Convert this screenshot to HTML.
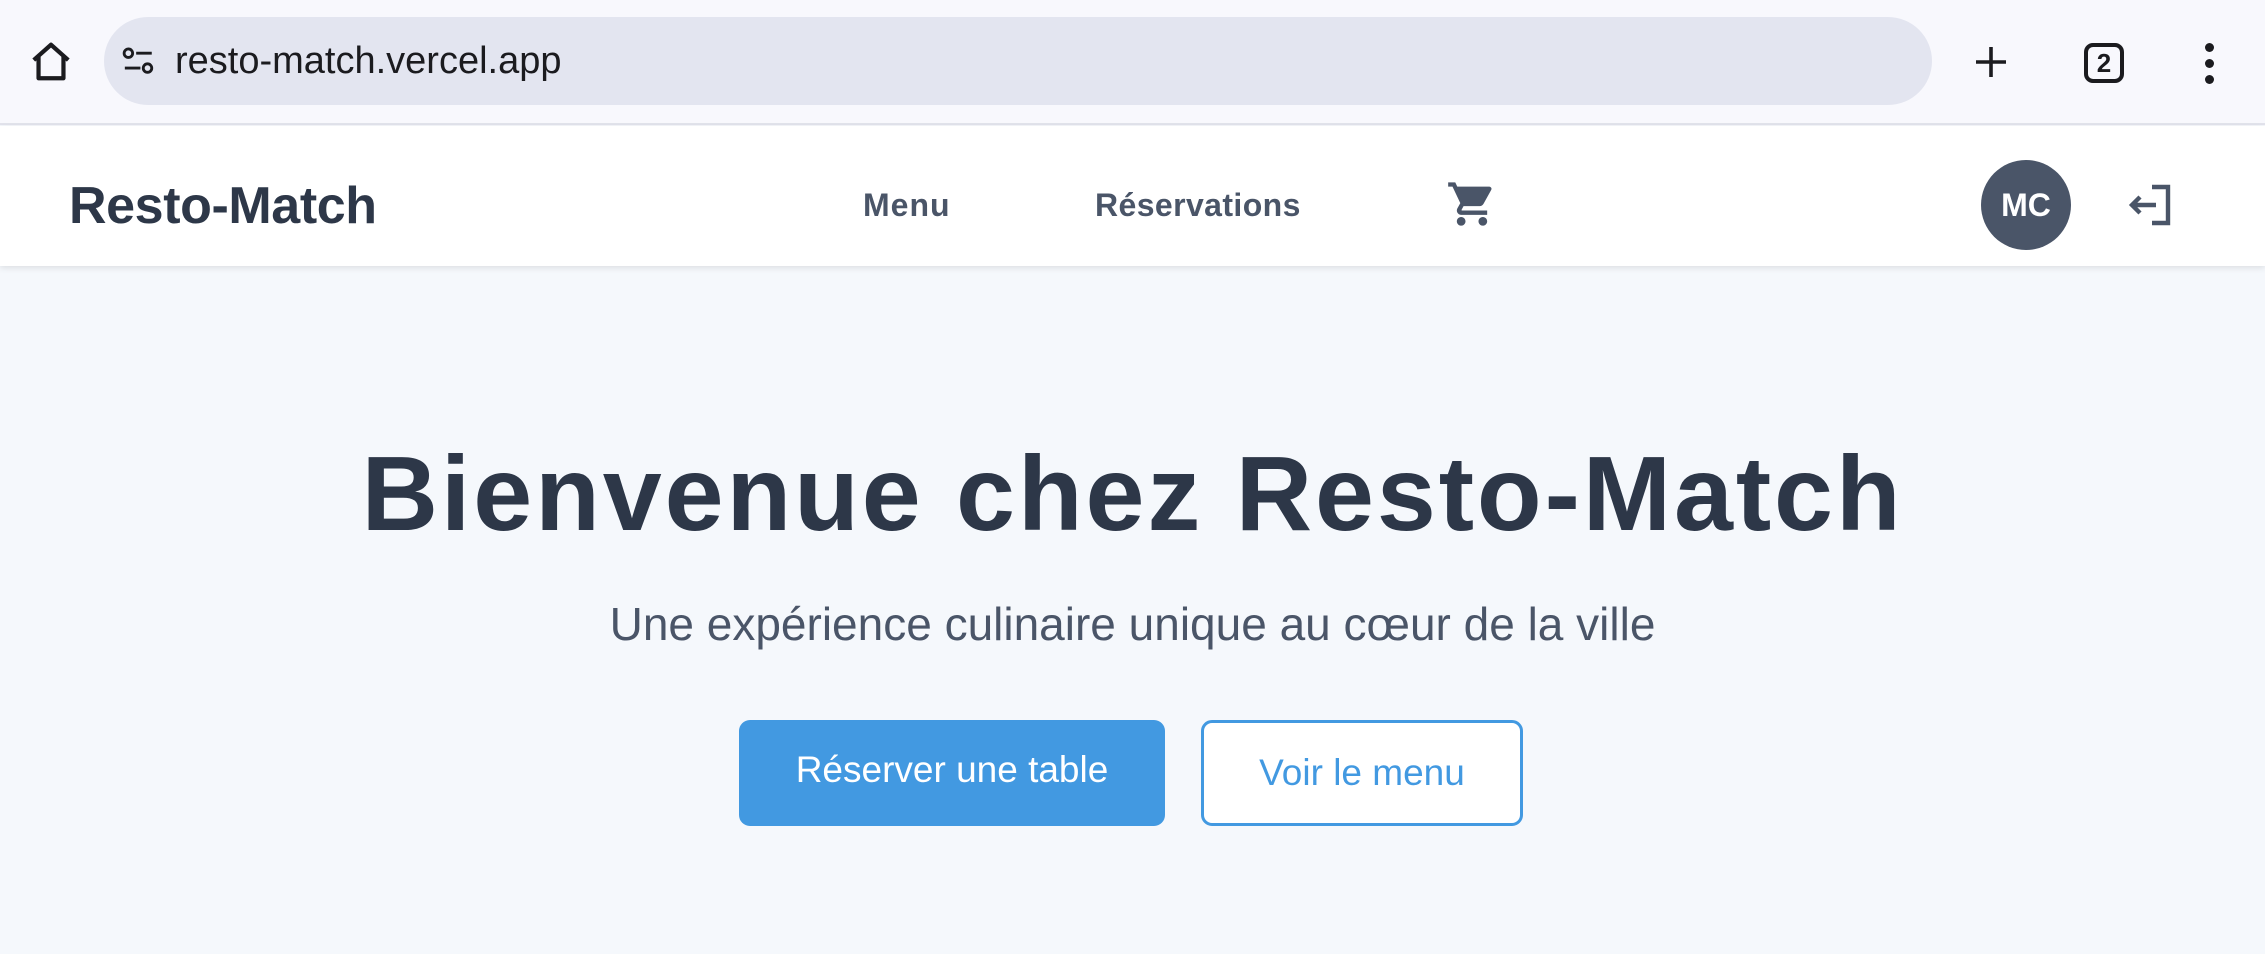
<!DOCTYPE html>
<html><head><meta charset="utf-8"><style>
*{margin:0;padding:0;box-sizing:border-box}
body{width:2265px;height:954px;overflow:hidden;background:#f5f8fc;font-family:"Liberation Sans",sans-serif;position:relative}
.abs{position:absolute}
#chrome{left:0;top:0;width:2265px;height:125px;background:#f8f8fd;border-bottom:2px solid #e2e3ec}
#url{left:104px;top:17px;width:1828px;height:88px;border-radius:44px;background:#e3e5f0}
#nav{left:0;top:126px;width:2265px;height:140px;background:#fff;box-shadow:0 2px 6px rgba(0,0,0,.1)}
.t{white-space:nowrap;line-height:1}
</style></head><body>
<div id="chrome" class="abs"></div>
<svg class="abs" style="left:28px;top:38px" width="46" height="48" viewBox="0 0 24 24"><path d="M3 11 L12 3 L21 11 M5.5 9 V20.5 H18.5 V9" fill="none" stroke="#1b1b1f" stroke-width="2.2" stroke-linejoin="round"/></svg>
<div id="url" class="abs"></div>
<svg class="abs" style="left:122px;top:46px" width="34" height="30" viewBox="0 0 24 20"><circle cx="4.5" cy="4.5" r="3" fill="none" stroke="#1b1b1f" stroke-width="2"/><path d="M10 4.5h11M2 15h11" stroke="#1b1b1f" stroke-width="2"/><circle cx="18" cy="15" r="3" fill="none" stroke="#1b1b1f" stroke-width="2"/></svg>
<div class="abs t" style="left:175px;top:42px;font-size:38px;color:#1b1b1f">resto-match.vercel.app</div>
<svg class="abs" style="left:1973px;top:44px" width="36" height="36" viewBox="0 0 24 24"><path d="M12 2v20M2 12h20" stroke="#1b1b1f" stroke-width="2.4"/></svg>
<div class="abs" style="left:2084px;top:43px;width:40px;height:40px;border:4px solid #1b1b1f;border-radius:9px;font-size:26px;font-weight:bold;text-align:center;line-height:32px;color:#1b1b1f">2</div>
<div class="abs" style="left:2205px;top:43px;width:10px;height:42px">
<div style="width:9px;height:9px;border-radius:50%;background:#1b1b1f;margin-bottom:7px"></div><div style="width:9px;height:9px;border-radius:50%;background:#1b1b1f;margin-bottom:7px"></div><div style="width:9px;height:9px;border-radius:50%;background:#1b1b1f"></div></div>
<div id="nav" class="abs"></div>
<div class="abs t" style="left:69px;top:180px;font-size:52px;font-weight:bold;color:#2d3748;letter-spacing:-0.4px">Resto-Match</div>
<div class="abs t" style="left:863px;top:189px;font-size:32px;font-weight:bold;color:#4a5568;letter-spacing:1px">Menu</div>
<div class="abs t" style="left:1095px;top:189px;font-size:32px;font-weight:bold;color:#4a5568;letter-spacing:0.4px">Réservations</div>
<svg class="abs" style="left:1446px;top:178px" width="52" height="52" viewBox="0 0 24 24"><path fill="#4a5568" d="M7 18c-1.1 0-2 .9-2 2s.9 2 2 2 2-.9 2-2-.9-2-2-2zM1 2v2h2l3.6 7.590-1.35 2.45c-.16.28-.25.61-.25.96 0 1.1.9 2 2 2h12v-2H7.42c-.14 0-.25-.11-.25-.25l.03-.12.9-1.63h7.45c.75 0 1.41-.41 1.75-1.03l3.58-6.49A1 1 0 0 0 20 4H5.21l-.94-2H1zm16 16c-1.1 0-2 .9-2 2s.9 2 2 2 2-.9 2-2-.9-2-2-2z"/></svg>
<div class="abs" style="left:1981px;top:160px;width:90px;height:90px;border-radius:50%;background:#4a5568;color:#fff;font-size:32px;font-weight:bold;text-align:center;line-height:90px">MC</div>
<svg class="abs" style="left:2127px;top:181px" width="50" height="48" viewBox="0 0 24 24"><path d="M12 3h8v18h-8M2 12h12M6 8l-4 4 4 4" fill="none" stroke="#4a5568" stroke-width="2.2"/></svg>
<div class="abs t" style="left:0;width:2265px;top:441px;text-align:center;font-size:106px;font-weight:bold;color:#2d3748;letter-spacing:2.9px">Bienvenue chez Resto-Match</div>
<div class="abs t" style="left:0;width:2265px;top:601px;text-align:center;font-size:46px;color:#4a5568">Une expérience culinaire unique au cœur de la ville</div>
<div class="abs" style="left:739px;top:720px;width:426px;height:106px;border-radius:11px;background:#4299e1;color:#fff;font-size:37px;text-align:center;line-height:100px">Réserver une table</div>
<div class="abs" style="left:1201px;top:720px;width:322px;height:106px;border-radius:11px;background:#fff;border:3px solid #4299e1;color:#4299e1;font-size:37px;text-align:center;line-height:100px">Voir le menu</div>
</body></html>
